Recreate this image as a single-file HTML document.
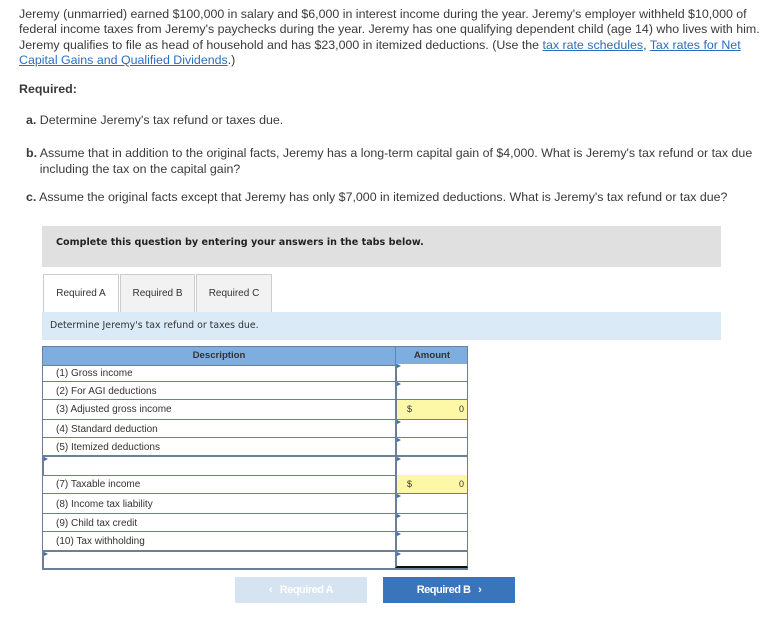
<!DOCTYPE html>
<html><head><meta charset="utf-8"><style>
body{margin:0;width:775px;height:623px;background:#fff;font-family:"Liberation Sans",Arial,sans-serif;color:#333;position:relative;overflow:hidden}
.a{position:absolute;white-space:nowrap}
.p{font-size:12.4px;letter-spacing:0;color:#3a3a3a}
a{color:#2a6ebb;text-decoration:underline}
.tab{position:absolute;top:274px;height:37px;border:1px solid #ccc;background:#f2f2f2;font-size:10px;line-height:37px;text-align:center;color:#333}
.row{position:absolute;left:42px;width:426px;border-bottom:1px solid #6b7f99;font-size:10px;color:#333}
.row .d{position:absolute;left:14px;top:4px}
.cell{position:absolute;left:353px;top:0;width:70px;bottom:0;border-left:2px solid #6b7f99;border-right:1px solid #6b7f99;background:#fff}
.mk{position:absolute;left:0;top:0;width:0;height:0;border-left:4px solid #3a6fb0;border-top:2px solid transparent;border-bottom:2px solid transparent}
</style></head><body>
<div class="a p" style="left:19px;top:7px;line-height:15.3px">Jeremy (unmarried) earned $100,000 in salary and $6,000 in interest income during the year. Jeremy's employer withheld $10,000 of<br>federal income taxes from Jeremy's paychecks during the year. Jeremy has one qualifying dependent child (age 14) who lives with him.<br>Jeremy qualifies to file as head of household and has $23,000 in itemized deductions. (Use the <a>tax rate schedules</a>, <a>Tax rates for Net</a><br><a>Capital Gains and Qualified Dividends</a>.)</div>
<div class="a p" style="left:19px;top:82px;font-weight:bold">Required:</div>
<div class="a p" style="left:26px;top:113px"><b>a.</b> Determine Jeremy's tax refund or taxes due.</div>
<div class="a p" style="left:26px;top:145px;line-height:16px"><b>b.</b> Assume that in addition to the original facts, Jeremy has a long-term capital gain of $4,000. What is Jeremy's tax refund or tax due<br>&nbsp;&nbsp;&nbsp;&nbsp;including the tax on the capital gain?</div>
<div class="a p" style="left:26px;top:190px"><b>c.</b> Assume the original facts except that Jeremy has only $7,000 in itemized deductions. What is Jeremy's tax refund or tax due?</div>

<div class="a" style="left:42px;top:226px;width:679px;height:41px;background:#e0e0e0"></div>
<div class="a" style="left:56px;top:237px;font-family:'DejaVu Sans',sans-serif;font-size:9.6px;font-weight:bold;color:#222">Complete this question by entering your answers in the tabs below.</div>

<div class="tab" style="left:43px;width:74px;background:#fff;border-bottom:none;height:38px">Required A</div>
<div class="tab" style="left:120px;width:73px">Required B</div>
<div class="tab" style="left:196px;width:74px">Required C</div>
<div class="a" style="left:42px;top:312px;width:679px;height:28px;background:#dbeaf7"></div>
<div class="a" style="left:50px;top:320px;font-family:'DejaVu Sans',sans-serif;font-size:9.4px;color:#333">Determine Jeremy's tax refund or taxes due.</div>

<div class="a" style="left:42px;top:346px;width:424px;height:18px;background:#7eaee0;border:1px solid #6b7f99;font-size:9.6px;font-weight:bold;color:#333">
<div class="a" style="left:0;width:352px;text-align:center;top:3px">Description</div>
<div class="a" style="left:352px;width:72px;text-align:center;border-left:1px solid #6b7f99;height:18px;top:0;line-height:18px">Amount</div></div>

<div class="a" style="left:42px;top:364px;width:1px;height:205px;background:#6b7f99"></div>
<div class="a" style="left:467px;top:364px;width:1px;height:205px;background:#6b7f99"></div>

<div class="row" style="top:364px;height:17px"><span class="d">(1) Gross income</span><div class="cell"><i class="mk"></i></div></div>
<div class="row" style="top:382px;height:17px"><span class="d">(2) For AGI deductions</span><div class="cell"><i class="mk"></i></div></div>
<div class="row" style="top:400px;height:19px"><span class="d">(3) Adjusted gross income</span><div class="cell" style="background:#fdf8a8"><span class="a" style="left:10px;top:4px;font-size:9px">$</span><span class="a" style="right:3px;top:4px;font-size:9px">0</span></div></div>
<div class="row" style="top:420px;height:17px"><span class="d">(4) Standard deduction</span><div class="cell"><i class="mk"></i></div></div>
<div class="row" style="top:438px;height:17px"><span class="d">(5) Itemized deductions</span><div class="cell"><i class="mk"></i></div></div>
<div class="row" style="top:456px;height:18px;border-top:1px solid #6b7f99;border-left:2px solid #6b7f99;width:424px"><i class="mk" style="position:absolute"></i><div class="cell" style="left:351px"><i class="mk"></i></div></div>
<div class="row" style="top:475px;height:18px"><span class="d">(7) Taxable income</span><div class="cell" style="background:#fdf8a8"><span class="a" style="left:10px;top:4px;font-size:9px">$</span><span class="a" style="right:3px;top:4px;font-size:9px">0</span></div></div>
<div class="row" style="top:494px;height:19px"><span class="d" style="top:5px">(8) Income tax liability</span><div class="cell"><i class="mk"></i></div></div>
<div class="row" style="top:514px;height:17px"><span class="d">(9) Child tax credit</span><div class="cell"><i class="mk"></i></div></div>
<div class="row" style="top:532px;height:18px"><span class="d">(10) Tax withholding</span><div class="cell"><i class="mk"></i></div></div>
<div class="row" style="top:551px;height:16px;border-top:1px solid #6b7f99;border-left:2px solid #6b7f99;width:424px;border-bottom:2px solid #6b7f99"><i class="mk" style="position:absolute"></i><div class="cell" style="left:351px;border-bottom:2px solid #111"><i class="mk"></i></div></div>

<div class="a" style="left:235px;top:577px;width:132px;height:26px;background:#d6e3f1;color:#fff;font-size:11px;font-weight:bold;text-align:center;line-height:26px;letter-spacing:-0.5px">‹&nbsp;&nbsp; Required A</div>
<div class="a" style="left:383px;top:577px;width:132px;height:26px;background:#3a75bb;color:#fff;font-size:11px;font-weight:bold;text-align:center;line-height:26px;letter-spacing:-0.5px">Required B&nbsp;&nbsp; ›</div>
</body></html>
